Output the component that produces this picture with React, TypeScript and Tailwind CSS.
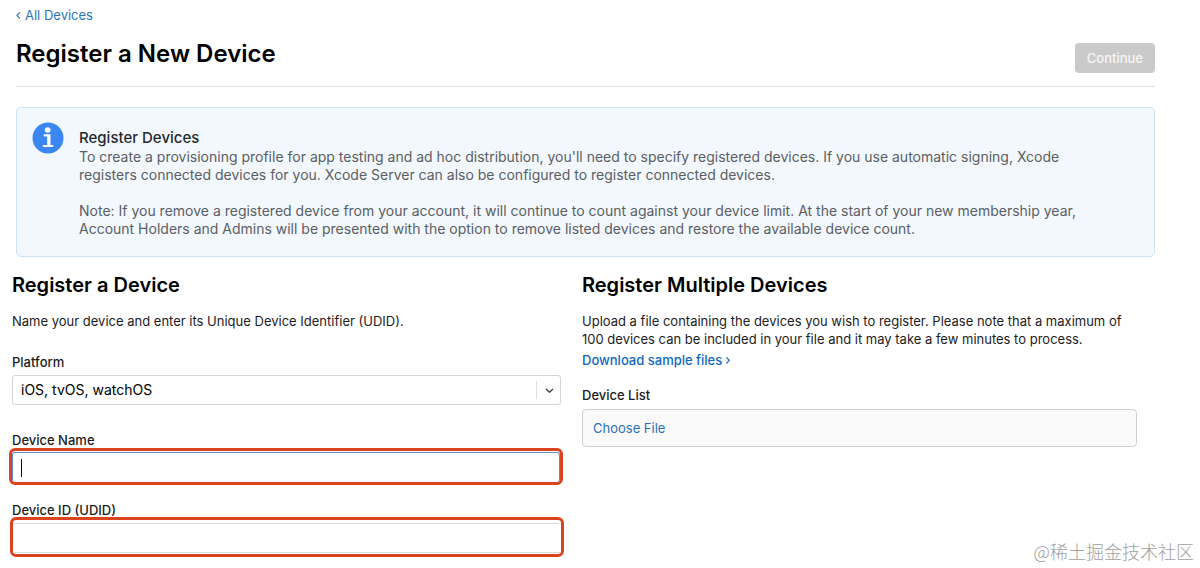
import React from 'react';

function InfoIcon() {
  return (
    <svg className="h-8 w-8 shrink-0" viewBox="0 0 32 32" aria-hidden="true">
      <circle cx="16" cy="16" r="15.5" fill="#3a87f2" />
      <circle cx="15.7" cy="8" r="2.8" fill="#fff" />
      <path d="M12.6 13.4H17.4V23.4M11.8 24H20.4" fill="none" stroke="#fff" strokeWidth="2.2" strokeLinecap="round" />
      <path d="M15.2 13.4H17.9V24H15.2Z" fill="#fff" />
    </svg>
  );
}

function Chevron({ d, className }: { d: string; className: string }) {
  return (
    <svg className={className} viewBox="0 0 10 10" fill="none" stroke="currentColor" strokeWidth="1.5" aria-hidden="true">
      <path d={d} strokeLinecap="round" strokeLinejoin="round" />
    </svg>
  );
}

function Header() {
  return (
    <header className="pl-4 pr-[45px] pt-[5px]">
      <a href="#devices" className="inline-flex items-center text-[13px] leading-5 text-[#2c74bd]">
        <Chevron d="M4.5 2L1.2 5.5L4.5 9" className="mr-px h-2 w-2" />
        All Devices
      </a>
      <div className="flex items-start justify-between border-b border-[#dcdee2] pb-[13px] pt-[11px]">
        <h1 className="text-2xl font-semibold leading-9 text-black">Register a New Device</h1>
        <button type="button" disabled className="mt-[7px] h-[30px] rounded bg-[#cacaca] px-3 text-[13px] font-medium text-[#f6f6f6]">
          Continue
        </button>
      </div>
    </header>
  );
}

function Notice() {
  return (
    <section className="ml-4 mr-[45px] mt-5 flex rounded-[5px] border border-[#cbe2f8] bg-[#f3f8fe] pb-[18px] pl-[15px] pr-16 pt-[14px]">
      <InfoIcon />
      <div className="ml-[15px] pt-[6px] text-sm font-normal leading-[18px] text-[#5a5e64]">
        <h2 className="text-[15px] leading-5 font-medium text-[#25282c]">Register Devices</h2>
        <p>
          To create a provisioning profile for app testing and ad hoc distribution, you'll need to specify registered devices. If you use automatic signing, Xcode registers connected devices for you. Xcode Server can also be configured to register connected devices.
        </p>
        <p className="mt-[18px]">
          Note: If you remove a registered device from your account, it will continue to count against your device limit. At the start of your new membership year, Account Holders and Admins will be presented with the option to remove listed devices and restore the available device count.
        </p>
      </div>
    </section>
  );
}

function SingleDevice() {
  return (
    <section>
      <h2 className="text-xl font-semibold leading-7 text-black">Register a Device</h2>
      <p className="mt-[13px] font-normal">Name your device and enter its Unique Device Identifier (UDID).</p>

      <label htmlFor="platform" className="mt-[23px] block">Platform</label>
      <div className="relative mt-1">
        <select id="platform" className="h-[30px] w-full appearance-none rounded-[3px] border border-[#d5d5d5] bg-white pl-2 pr-8 text-sm font-normal text-black">
          <option>iOS, tvOS, watchOS</option>
        </select>
        <span className="pointer-events-none absolute inset-y-[6px] right-0 flex w-[25px] items-center justify-center border-l border-[#dedede] text-[#444]">
          <Chevron d="M1.5 3.5L5 7L8.5 3.5" className="h-[9px] w-[9px]" />
        </span>
      </div>

      <label htmlFor="name" className="mt-[26px] block">Device Name</label>
      <div className="relative -ml-[3px] -mr-[2px] -mt-px rounded-md border-3 border-[#dc4420] pt-px">
        <input id="name" type="text" className="block h-[30px] w-full rounded-[3px] border border-b-0 border-[#5d8dcb] px-2 text-[15px] outline-none" />
        <span className="absolute left-[9px] top-2 h-[18px] w-px bg-black" />
      </div>

      <label htmlFor="udid" className="mt-4 block">Device ID (UDID)</label>
      <div className="-ml-[2px] -mr-[3px] -mt-[2px] rounded-md border-3 border-[#dc4420] pb-px pt-[3px]">
        <input id="udid" type="text" className="block h-[30px] w-full border-y border-[#dcdcdc] px-2 text-[15px] outline-none" />
      </div>
    </section>
  );
}

function MultipleDevices() {
  return (
    <section>
      <h2 className="text-xl font-semibold leading-7 text-black">Register Multiple Devices</h2>
      <p className="mt-[13px] font-normal">
        Upload a file containing the devices you wish to register. Please note that a maximum of 100 devices can be included in your file and it may take a few minutes to process.
      </p>
      <a href="#samples" className="mt-[3px] flex items-center text-[#0f68c2]">
        Download sample files
        <Chevron d="M3.5 2L6.5 5.5L3.5 9" className="ml-[2px] h-2 w-2" />
      </a>
      <label htmlFor="device-list" className="mt-[17px] block">Device List</label>
      <label className="mt-[5px] flex h-[38px] items-center rounded-[4px] border border-[#cfcfcf] bg-[#fafafa] px-[10px] font-normal text-[#2c6fbb]">
        Choose File
        <input id="device-list" type="file" className="sr-only" />
      </label>
    </section>
  );
}

export default function App() {
  return (
    <main className="relative min-h-screen bg-white font-['Inter',sans-serif] text-[13px] leading-[18px] text-[#1c1c1e]">
      <Header />
      <Notice />
      <div className="grid grid-cols-[549fr_555fr] gap-[21px] pl-3 pr-[63px] pt-[14px] font-medium">
        <SingleDevice />
        <MultipleDevices />
      </div>
      <span className="absolute bottom-[5px] right-[6px] font-['Noto_Sans_CJK_SC',sans-serif] text-lg font-light leading-6 text-[#a0a0a0]">
        @稀土掘金技术社区
      </span>
    </main>
  );
}
